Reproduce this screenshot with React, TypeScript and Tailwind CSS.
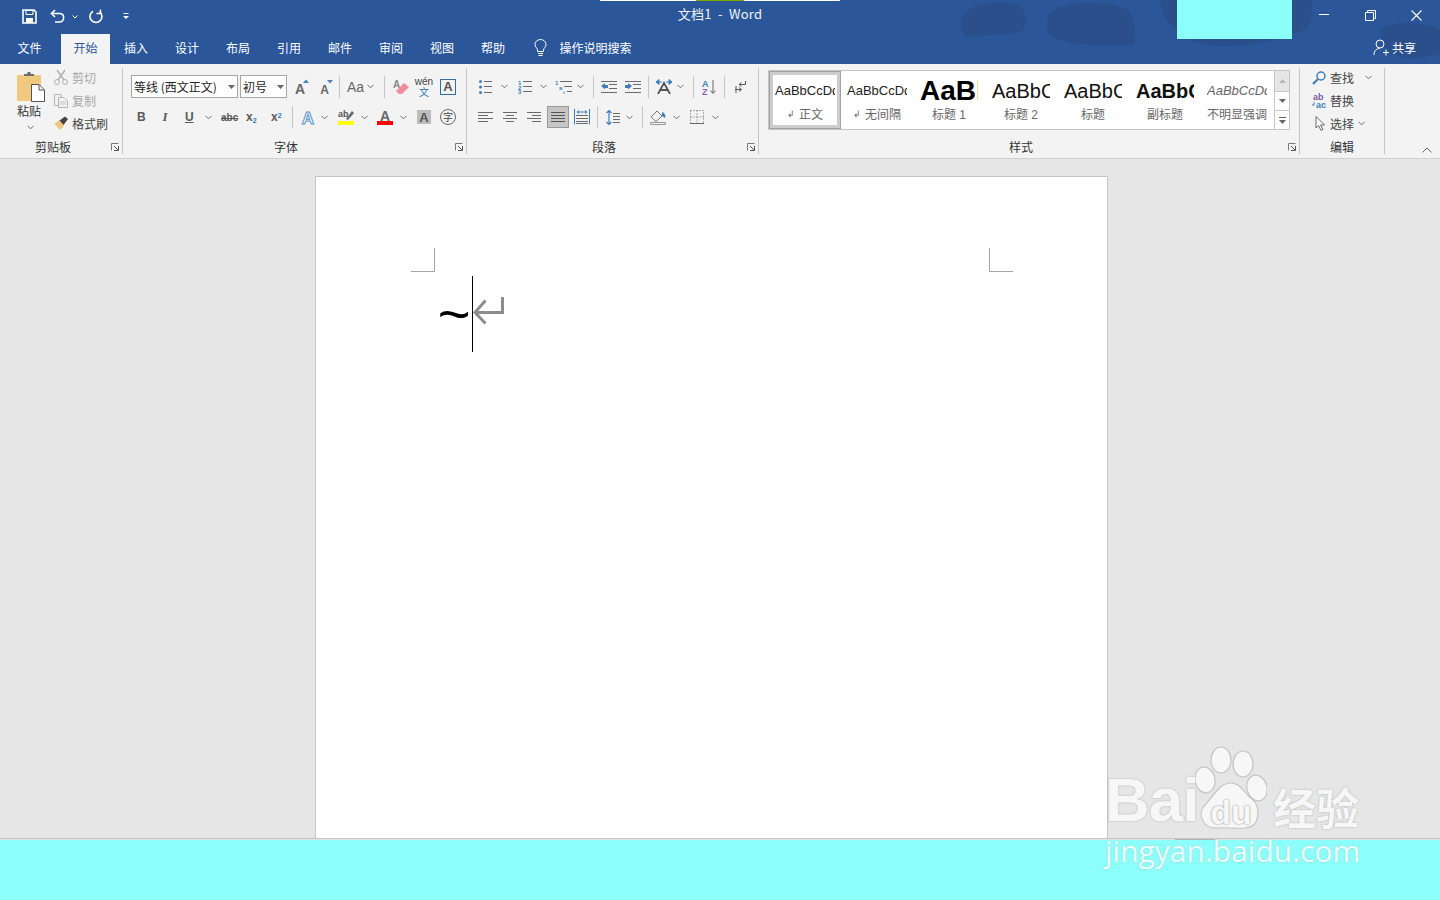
import React from "react";

type P = { className?: string };
const cjk = "font-['Noto_Sans_CJK_SC','Noto_Sans',sans-serif]";

const Svg = ({ w, h = 16, className = "", children }: { w: number; h?: number; className?: string; children: React.ReactNode }) => (
  <svg width={w} height={h} viewBox={`0 0 ${w} ${h}`} className={"block shrink-0 " + className} fill="none">
    {children}
  </svg>
);
const Chev = ({ className = "" }: P) => (
  <Svg w={7} h={5} className={className}><path d="M0.5 0.8 L3.5 3.8 L6.5 0.8" stroke="#6a6a6a" strokeWidth="1" /></Svg>
);
const Sep = ({ className = "" }: P) => <div className={"w-px h-[22px] bg-[#c6c6c6] shrink-0 " + className} />;
const Lines = ({ rows, stroke = "#6a6a6a" }: { rows: [number, number, number][]; stroke?: string }) => (
  <>{rows.map(([x1, x2, y], i) => <path key={i} d={`M${x1} ${y}.5H${x2}`} stroke={stroke} />)}</>
);
const Launcher = ({ className = "" }: P) => (
  <Svg w={8} h={8} className={className}>
    <path d="M0.5 7.5V0.5H7.5" stroke="#7a7a7a" />
    <path d="M7.5 3V7.5H3M7 7L3 3" stroke="#555" />
  </Svg>
);
const GroupLabel = ({ text, launcher = "" }: { text: string; launcher?: string }) => (
  <div className="h-[22px] flex items-center">
    <span className="flex-1 text-center text-[12px] leading-[20px] text-[#333]">{text}</span>
    {launcher && <Launcher className={launcher} />}
  </div>
);
const Divider = () => <div className="w-px h-[86px] mt-[4px] bg-[#c6c6c6] shrink-0" />;
const LetterA = ({ fill = "#666", size = 15, w = 16, y = 14, stroke }: { fill?: string; size?: number; w?: number; y?: number; stroke?: string }) => (
  <text x={w / 2} y={y} textAnchor="middle" fontFamily="Liberation Sans" fontWeight="700" fontSize={size} fill={fill} stroke={stroke} strokeWidth={stroke ? 1 : 0}>A</text>
);
const SmallNum = ({ x, y, t, fill = "#3f7fc0" }: { x: number; y: number; t: string; fill?: string }) => (
  <text x={x} y={y} fontFamily="Liberation Sans" fontSize="6" fontWeight="700" fill={fill}>{t}</text>
);

const Gallery = ({ sample, label, sampleCls, selected = false, mark = false, inner = "w-[60px]" }: { sample: string; label: string; sampleCls: string; selected?: boolean; mark?: boolean; inner?: string }) => (
  <div className={"w-[72px] h-[58px] shrink-0 flex flex-col items-center border " + (selected ? "border-[#a0a0a0] shadow-[inset_0_0_0_3px_#cdcdcd]" : "border-transparent")}>
    <div className={"mt-[1px] h-[36px] shrink-0 overflow-hidden flex items-center whitespace-nowrap " + inner}>
      <span className={sampleCls}>{sample}</span>
    </div>
    <div className="h-[12px] flex items-center justify-center text-[12px] text-[#666] whitespace-nowrap">
      {mark && <span className="text-[9px] mr-[4px] text-[#666]">↲</span>}
      {label}
    </div>
  </div>
);

const Paw = () => (
  <svg width="72" height="86" viewBox="0 0 72 86" className="block shrink-0" fill="#f7f7f7" stroke="#c4c4c4" strokeWidth="1.2">
    <ellipse cx="26" cy="15" rx="10" ry="13" />
    <ellipse cx="48" cy="19" rx="10" ry="13" />
    <ellipse cx="10" cy="35" rx="10" ry="13" transform="rotate(-10 10 35)" />
    <ellipse cx="62" cy="43" rx="10" ry="13" transform="rotate(-15 62 43)" />
    <path d="M36 38C46 38 49 48 57 54C66 61 66 82 50 83C42 84 30 82 22 83C7 84 2 68 10 60C18 52 24 38 36 38Z" />
  </svg>
);

export default function App() {
  return (
    <div className={"relative w-[1440px] h-[900px] overflow-hidden flex flex-col bg-[#e6e6e6] " + cjk}>
      {/* Blue header */}
      <div className="relative h-[64px] shrink-0 bg-[#2b579a] text-white">
        <svg width="480" height="64" viewBox="0 0 480 64" className="absolute right-0 top-0" fill="#2a4f8a">
          <path d="M4 14C14 0 50 0 60 6C68 14 68 28 60 32C44 36 20 34 6 38C0 30 0 22 4 14Z" />
          <path d="M90 14C100 0 150 0 168 10C176 20 176 34 174 44C150 48 120 46 98 40C86 34 84 24 90 14Z" />
          <path d="M200 0H352C352 14 350 26 346 30C330 32 310 46 270 46C240 48 205 36 200 0Z" />
          <path d="M420 30C436 18 470 24 480 30V54C460 60 432 60 424 46Z" />
        </svg>
        <div className="relative h-[36px] flex items-start">
          <div className="w-[600px] h-[33px] flex items-center">
            <Svg w={15} h={15} className="ml-[22px]">
              <path d="M1 1H12L14 3V14H1Z" stroke="#fff" strokeWidth="1.6" />
              <path d="M4 1.5H11V5.5H4Z" stroke="#fff" />
              <path d="M4 9H11V14H4Z" fill="#fff" />
            </Svg>
            <Svg w={16} h={15} className="ml-[13px]">
              <path d="M5 1L1.5 4.5L5 8" stroke="#fff" strokeWidth="1.6" />
              <path d="M2 4.5H9.5C15 4.5 15 13 9.5 13H5" stroke="#fff" strokeWidth="1.6" />
            </Svg>
            <Svg w={6} h={4} className="ml-[6px]"><path d="M0.5 0.5L3 3L5.5 0.5" stroke="#fff" /></Svg>
            <Svg w={15} h={15} className="ml-[11px]">
              <path d="M4 2.2A6 6 0 1 0 10.500 2.6" stroke="#fff" strokeWidth="1.6" />
              <path d="M11.500 0.500V4.500H7.500" stroke="#fff" strokeWidth="1.4" />
            </Svg>
            <Svg w={6} h={7} className="ml-[19px]"><path d="M0.5 0.5H5.5" stroke="#fff" /><path d="M0 3L3 6L6 3Z" fill="#fff" /></Svg>
          </div>
          <div className="w-[240px] h-[36px] flex flex-col items-center">
            <div className="w-full h-px flex bg-white shrink-0">
              <div className="ml-[96px] w-[48px] h-px bg-[#7ba800]" />
            </div>
            <div className="mt-[4px] text-[13px] leading-[18px] whitespace-pre tracking-[0.25px] text-[#f2f2f2]">文档1  -  Word</div>
          </div>
          <div className="flex-1 h-[36px] flex items-center justify-end">
            <Svg w={10} h={2} className="mr-[36px] -mt-[6px]"><path d="M0 0.5H10" stroke="#fff" /></Svg>
            <Svg w={11} h={11} className="mr-[35px] -mt-[6px]">
              <path d="M0.5 2.5H8.5V10.5H0.5Z" stroke="#fff" /><path d="M2.5 2.5V0.5H10.5V8.5H8.5" stroke="#fff" />
            </Svg>
            <Svg w={11} h={11} className="mr-[18px] -mt-[6px]"><path d="M0.5 0.5L10.5 10.5M10.5 0.5L0.5 10.5" stroke="#fff" strokeWidth="1.1" /></Svg>
          </div>
        </div>
        <div className="relative h-[28px] flex items-end text-[12px] text-center pl-[4px]">
          <div className="w-[51px] h-[28px] leading-[24px]">文件</div>
          <div className="w-[49px] h-[30px] ml-[6px] bg-[#f3f3f3] text-[#2b579a] leading-[27px]">开始</div>
          <div className="w-[51px] h-[28px] leading-[24px] ml-[0.5px]">插入</div>
          <div className="w-[51px] h-[28px] leading-[24px]">设计</div>
          <div className="w-[51px] h-[28px] leading-[24px]">布局</div>
          <div className="w-[51px] h-[28px] leading-[24px]">引用</div>
          <div className="w-[51px] h-[28px] leading-[24px]">邮件</div>
          <div className="w-[51px] h-[28px] leading-[24px]">审阅</div>
          <div className="w-[51px] h-[28px] leading-[24px]">视图</div>
          <div className="w-[51px] h-[28px] leading-[24px]">帮助</div>
          <div className="h-[28px] flex items-start pt-[3px] ml-[15px]">
            <Svg w={13} h={17}>
              <path d="M3.5 11C3 8.5 1 8 1 5.5A5.5 5 0 0 1 12 5.5C12 8 10 8.500 9.500 11V12.500H3.500Z" stroke="#fff" />
              <path d="M4 14.500H9M4.500 16.500H8.500" stroke="#fff" />
            </Svg>
          </div>
          <div className="h-[28px] leading-[24px] ml-[13px]">操作说明搜索</div>
          <div className="flex-1 h-[28px] flex items-start justify-end pr-[24px] pt-[3px]">
            <Svg w={16} h={17}>
              <circle cx="7" cy="5" r="4" stroke="#fff" />
              <path d="M1 16C1 11 4 9.500 7 9.500M10 13.500H16M13 10.500V16.500" stroke="#fff" />
            </Svg>
            <span className="ml-[3px] leading-[17px]">共享</span>
          </div>
        </div>
        <div className="absolute left-[1177px] top-0 w-[115px] h-[39px] bg-[#8cfffb]" />
      </div>

      {/* Ribbon */}
      <div className="h-[95px] shrink-0 flex bg-[#f3f3f3] border-b border-[#d0d0d0]">
        {/* Clipboard */}
        <div className="w-[122px] shrink-0 flex flex-col">
          <div className="h-[72px] flex">
            <div className="w-[54px] pl-[17px] pt-[7px] flex flex-col">
              <Svg w={28} h={31}>
                <path d="M0 4H24V30H0Z" fill="#f0c97f" />
                <path d="M7 5V3H10C10 0 14 0 14 3H17V5Z" fill="#6d6d6d" />
                <path d="M14.500 13.500H22L27.500 19V30.500H14.500Z" fill="#fff" stroke="#555" />
                <path d="M22 14V19H27" stroke="#555" />
              </Svg>
              <div className="mt-[1px] text-[12px] leading-[16px] text-[#333]">粘贴</div>
              <Chev className="ml-[10px] mt-[6px]" />
            </div>
            <div className="pt-[2px]">
              <div className="h-[23px] flex items-center text-[12px] text-[#a6a6a6]">
                <Svg w={14} h={15} className="mr-[4px]">
                  <path d="M3 0L10 10M11 0L4 10" stroke="#b0b0b0" strokeWidth="1.5" />
                  <circle cx="3" cy="12" r="2.500" stroke="#b0b0b0" /><circle cx="11" cy="12" r="2.500" stroke="#b0b0b0" />
                </Svg>
                剪切
              </div>
              <div className="h-[23px] flex items-center text-[12px] text-[#a6a6a6]">
                <Svg w={14} h={14} className="mr-[4px]">
                  <path d="M0.500 0.500H7V3M0.500 0.500V11.500H4.500" stroke="#b4b4b4" />
                  <path d="M4.500 3.500H10L13.500 7V13.500H4.500Z" stroke="#b4b4b4" />
                  <path d="M6 8H12M6 10H12" stroke="#c4c4c4" />
                </Svg>
                复制
              </div>
              <div className="h-[23px] flex items-center text-[12px] text-[#444]">
                <Svg w={15} h={15} className="mr-[3px]">
                  <path d="M0.500 8L5 4L10 10L6 14Z" fill="#f0c97f" />
                  <path d="M5.500 4.500L11 0.500L14 3L9.500 9Z" fill="#444" />
                </Svg>
                格式刷
              </div>
            </div>
          </div>
          <GroupLabel text="剪贴板" launcher="ml-[5px] mr-[3px]" />
        </div>
        <Divider />

        {/* Font */}
        <div className="w-[343px] shrink-0 flex flex-col">
          <div className="h-[72px] pt-[11px]">
            <div className="h-[23px] flex items-center">
              <div className="ml-[8px] w-[107px] h-[23px] bg-white border border-[#a6a6a6] flex items-center pl-[2px] text-[12px] text-[#222] whitespace-nowrap">
                <span className="w-[92px]">等线 (西文正文)</span>
                <Svg w={7} h={4} className="ml-[2px]"><path d="M0 0H7L3.500 4Z" fill="#666" /></Svg>
              </div>
              <div className="ml-[2px] w-[47px] h-[23px] bg-white border border-[#a6a6a6] flex items-center pl-[2px] text-[12px] text-[#222]">
                <span className="w-[32px]">初号</span>
                <Svg w={7} h={4} className="ml-[2px]"><path d="M0 0H7L3.500 4Z" fill="#666" /></Svg>
              </div>
              <Svg w={14} h={16} className="ml-[8px]"><LetterA w={10} size={14} y={15} /><path d="M8 4L11 0.500L14 4Z" fill="#4a83bd" /></Svg>
              <Svg w={13} h={16} className="ml-[11px]"><LetterA w={9} size={12} y={15} /><path d="M7 1H13L10 4.500Z" fill="#4a83bd" /></Svg>
              <Sep className="ml-[6px]" />
              <span className="ml-[7px] w-[17px] text-[14px] leading-[16px] text-[#666] font-['Liberation_Sans']">Aa</span>
              <Chev className="ml-[3px]" />
              <Sep className="ml-[10px]" />
              <Svg w={16} h={16} className="ml-[8px]">
                <text x="0" y="9" fontFamily="Liberation Sans" fontSize="10" fontWeight="700" fill="#888">A</text>
                <path d="M3 12L11 4L16 8L9 15H6Z" fill="#ee8d9c" />
              </Svg>
              <div className="ml-[7px] w-[16px] flex flex-col items-center leading-none">
                <span className="text-[10px] h-[9px] leading-[9px] text-[#444] font-['Liberation_Sans']">wén</span>
                <span className="text-[10px] h-[10px] leading-[10px] mt-[1px] text-[#2f75b5]">文</span>
              </div>
              <div className="ml-[8px] w-[16px] h-[16px] border border-[#2f6ea5] flex items-center justify-center text-[13px] leading-none font-bold text-[#555] font-['Liberation_Sans']">A</div>
            </div>
            <div className="mt-[8px] h-[22px] flex items-center text-[#5a5a5a] font-['Liberation_Sans'] font-bold">
              <span className="ml-[14px] w-[8px] text-center text-[12px]">B</span>
              <span className="ml-[16px] w-[8px] text-center text-[13px] italic font-['Liberation_Serif']">I</span>
              <span className="ml-[16px] w-[8px] text-center text-[12px] underline">U</span>
              <Chev className="ml-[12px]" />
              <span className="ml-[9px] w-[16px] text-center text-[10px] line-through">abc</span>
              <span className="ml-[9px] w-[12px] text-[12px] leading-none whitespace-nowrap">x<sub className="text-[7px] text-[#2f75b5]">2</sub></span>
              <span className="ml-[13px] w-[12px] text-[12px] leading-none whitespace-nowrap">x<sup className="text-[7px] text-[#2f75b5]">2</sup></span>
              <Sep className="ml-[9px]" />
              <Svg w={16} h={17} className="ml-[7px]"><LetterA size={17} y={15} fill="#fff" stroke="#5b92c8" /></Svg>
              <Chev className="ml-[5px]" />
              <Svg w={16} h={16} className="ml-[10px]">
                <text x="0" y="8" fontFamily="Liberation Sans" fontSize="9" fontWeight="700" fill="#555">ab</text>
                <path d="M8 10L14 2L16 4L10 11Z" fill="#666" />
                <path d="M0 12H16V16H0Z" fill="#ffff00" />
              </Svg>
              <Chev className="ml-[7px]" />
              <Svg w={16} h={16} className="ml-[9px]">
                <LetterA size={14} y={11.500} fill="#666" />
                <path d="M0 12H16V16H0Z" fill="#ff0000" />
              </Svg>
              <Chev className="ml-[7px]" />
              <div className="ml-[10px] w-[14px] h-[14px] bg-[#bdbdbd] flex items-center justify-center text-[13px] leading-none text-[#555]">A</div>
              <div className={"ml-[9px] w-[16px] h-[16px] rounded-full border border-[#666] flex items-center justify-center text-[10px] font-normal leading-none text-[#444] " + cjk}>字</div>
            </div>
          </div>
          <GroupLabel text="字体" launcher="ml-[6px] mr-[3px]" />
        </div>
        <Divider />

        {/* Paragraph */}
        <div className="w-[291px] shrink-0 flex flex-col">
          <div className="h-[72px] pt-[11px]">
            <div className="h-[23px] flex items-center">
              <Svg w={13} h={14} className="ml-[12px]">
                <circle cx="1.500" cy="1.500" r="1.500" fill="#3f7fc0" /><circle cx="1.500" cy="7" r="1.500" fill="#3f7fc0" /><circle cx="1.500" cy="12.500" r="1.500" fill="#3f7fc0" />
                <Lines rows={[[5, 13, 1], [5, 13, 6], [5, 13, 12]]} />
              </Svg>
              <Chev className="ml-[9px]" />
              <Svg w={14} h={14} className="ml-[10px]">
                <SmallNum x={0} y={4.500} t="1" /><SmallNum x={0} y={9.500} t="2" /><SmallNum x={0} y={14} t="3" />
                <Lines rows={[[5, 14, 1], [5, 14, 6], [5, 14, 11]]} />
              </Svg>
              <Chev className="ml-[8px]" />
              <Svg w={17} h={14} className="ml-[8px]">
                <SmallNum x={0} y={5} t="1" /><SmallNum x={4} y={10} t="a" /><SmallNum x={8} y={14.500} t="i" />
                <Lines rows={[[5, 17, 1], [9, 17, 6], [12, 17, 11]]} />
              </Svg>
              <Chev className="ml-[5px]" />
              <Sep className="ml-[9px]" />
              <Svg w={16} h={14} className="ml-[7px]">
                <Lines rows={[[0, 16, 1], [8, 16, 4], [8, 16, 8], [0, 16, 12]]} />
                <path d="M0 6L4 3V5H7V8H4V9.500Z" fill="#3f7fc0" />
              </Svg>
              <Svg w={16} h={14} className="ml-[8px]">
                <Lines rows={[[0, 16, 1], [8, 16, 4], [8, 16, 8], [0, 16, 12]]} />
                <path d="M7 6L3 3V5H0V8H3V9.500Z" fill="#3f7fc0" />
              </Svg>
              <Sep className="ml-[7px]" />
              <Svg w={16} h={15} className="ml-[7px]">
                <path d="M2 15L8 4L14 15M4.500 11H11.500" stroke="#555" strokeWidth="1.800" />
                <path d="M0 3L3 0.500V5.500ZM16 3L13 0.500V5.500ZM3 3H6M10 3H13" fill="#3f7fc0" stroke="#3f7fc0" />
              </Svg>
              <Chev className="ml-[5px]" />
              <Sep className="ml-[9px]" />
              <Svg w={14} h={16} className="ml-[8px]">
                <text x="0" y="7.500" fontFamily="Liberation Sans" fontSize="9" fontWeight="700" fill="#3f7fc0">A</text>
                <text x="0" y="15.500" fontFamily="Liberation Sans" fontSize="9" fontWeight="700" fill="#8e5fb8">Z</text>
                <path d="M11 1V14M8.500 11.500L11 14.500L13.500 11.500" stroke="#666" />
              </Svg>
              <Sep className="ml-[8px]" />
              <Svg w={11} h={14} className="ml-[10px]">
                <path d="M10.500 1V4.500H4.500M6.500 2.500L4 4.500L6.500 6.500" stroke="#555" />
                <path d="M0 9.500H6M4 7.500L6.500 9.500L4 11.500M1 6V13" stroke="#555" />
              </Svg>
            </div>
            <div className="mt-[8px] h-[22px] flex items-center">
              <Svg w={15} h={11} className="ml-[11px]"><Lines rows={[[0, 15, 0], [0, 10, 3], [0, 15, 6], [0, 10, 9]]} /></Svg>
              <Svg w={14} h={11} className="ml-[10px]"><Lines rows={[[0, 14, 0], [3, 11, 3], [0, 14, 6], [3, 11, 9]]} /></Svg>
              <Svg w={14} h={11} className="ml-[10px]"><Lines rows={[[0, 14, 0], [5, 14, 3], [0, 14, 6], [5, 14, 9]]} /></Svg>
              <div className="ml-[6px] w-[22px] h-[22px] bg-[#c6c6c6] border border-[#9a9a9a] flex items-center justify-center">
                <Svg w={14} h={11}><Lines rows={[[0, 14, 0], [0, 14, 3], [0, 14, 6], [0, 14, 9]]} stroke="#555" /></Svg>
              </div>
              <Svg w={16} h={16} className="ml-[5px]">
                <path d="M0.500 0V15.500M15.500 0V15.500" stroke="#3f7fc0" />
                <path d="M3 3H13M3 3L5 1.500M3 3L5 4.500M13 3L11 1.500M13 3L11 4.500" stroke="#3f7fc0" />
                <Lines rows={[[2, 14, 6], [2, 14, 9], [2, 14, 12], [2, 14, 14]]} />
              </Svg>
              <Sep className="ml-[7px]" />
              <Svg w={14} h={15} className="ml-[8px]">
                <path d="M3 0.500V14.500M0.500 3L3 0.500L5.500 3M0.500 12L3 14.500L5.500 12" stroke="#3f7fc0" strokeWidth="1.200" />
                <Lines rows={[[7, 14, 3], [7, 14, 6], [7, 14, 9], [7, 14, 12]]} />
              </Svg>
              <Chev className="ml-[6px]" />
              <Sep className="ml-[9px]" />
              <Svg w={16} h={16} className="ml-[7px]">
                <path d="M1 8L7 2L12 7L6 12.500Z" stroke="#777" />
                <path d="M12 3C15 4 16 7 15 9L12 7Z" fill="#3f7fc0" />
                <path d="M0.500 13.500H15.500V15.500H0.500Z" stroke="#999" />
              </Svg>
              <Chev className="ml-[7px]" />
              <Svg w={14} h={14} className="ml-[10px]">
                <path d="M0.500 0.500H13.500V13.500H0.500ZM7 0.500V13.500M0.500 7H13.500" stroke="#666" strokeDasharray="1 2" />
                <path d="M0 13.500H14" stroke="#666" />
              </Svg>
              <Chev className="ml-[8px]" />
            </div>
          </div>
          <GroupLabel text="段落" launcher="ml-[6px] mr-[3px]" />
        </div>
        <Divider />

        {/* Styles */}
        <div className="w-[540px] shrink-0 flex flex-col">
          <div className="h-[72px] pt-[6px] pl-[9px]">
            <div className="w-[522px] h-[60px] bg-white border border-[#c6c6c6] flex font-['Liberation_Sans','Noto_Sans_CJK_SC',sans-serif]">
              <Gallery selected mark sample="AaBbCcDd" label="正文" sampleCls="text-[13px] text-[#222]" />
              <Gallery mark sample="AaBbCcDd" label="无间隔" sampleCls="text-[13px] text-[#222]" />
              <Gallery sample="AaBbC" label="标题 1" inner="w-[58px]" sampleCls="text-[28px] font-bold text-black" />
              <Gallery sample="AaBbCc" label="标题 2" inner="w-[58px]" sampleCls="text-[20px] text-[#111]" />
              <Gallery sample="AaBbCc" label="标题" inner="w-[58px]" sampleCls="text-[20px] text-[#111]" />
              <Gallery sample="AaBbCc" label="副标题" inner="w-[58px]" sampleCls="text-[20px] font-bold text-[#111]" />
              <Gallery sample="AaBbCcDd" label="不明显强调" sampleCls="text-[13px] italic text-[#666]" />
              <div className="w-[15px] ml-auto shrink-0 flex flex-col border-l border-[#c6c6c6]">
                <div className="h-[21px] bg-[#e6e6e6] border-b border-[#c6c6c6] flex items-center justify-center"><Svg w={7} h={4}><path d="M0 4H7L3.500 0Z" fill="#b5b5b5" /></Svg></div>
                <div className="h-[19px] border-b border-[#c6c6c6] flex items-center justify-center"><Svg w={7} h={4}><path d="M0 0H7L3.500 4Z" fill="#666" /></Svg></div>
                <div className="flex-1 flex items-center justify-center"><Svg w={7} h={7}><path d="M0 0.500H7" stroke="#666" /><path d="M0 3H7L3.500 7Z" fill="#666" /></Svg></div>
              </div>
            </div>
          </div>
          <GroupLabel text="样式" launcher="ml-[5px] mr-[3px]" />
        </div>
        <Divider />

        {/* Editing */}
        <div className="w-[84px] shrink-0 flex flex-col">
          <div className="h-[72px] pt-[2px] text-[12px] text-[#444]">
            <div className="h-[23px] flex items-center pl-[12px]">
              <Svg w={14} h={14} className="mr-[4px]">
                <circle cx="9" cy="5" r="4" stroke="#3f7fc0" strokeWidth="1.500" />
                <path d="M6 8L1 13" stroke="#3f7fc0" strokeWidth="2.200" />
              </Svg>
              查找
              <Chev className="ml-[11px]" />
            </div>
            <div className="h-[23px] flex items-center pl-[11px]">
              <Svg w={16} h={16} className="mr-[3px]">
                <text x="2" y="7" fontFamily="Liberation Sans" fontSize="9" fontWeight="700" fill="#7e57a8">ab</text>
                <text x="5" y="15" fontFamily="Liberation Sans" fontSize="9" fontWeight="700" fill="#3f7fc0">ac</text>
                <path d="M3 9V12H1" stroke="#3f7fc0" />
              </Svg>
              替换
            </div>
            <div className="h-[23px] flex items-center pl-[15px]">
              <Svg w={11} h={15} className="mr-[4px]">
                <path d="M1 0.500V12L3.500 9.500L6 14.500L8 13.500L5.500 9H9.500Z" stroke="#666" fill="#fff" />
              </Svg>
              选择
              <Chev className="ml-[4px]" />
            </div>
          </div>
          <GroupLabel text="编辑" />
        </div>
        <Divider />
        <div className="flex-1">
          <Svg w={10} h={6} className="ml-[37px] mt-[83px]"><path d="M0.500 5.500L5 1L9.500 5.500" stroke="#666" /></Svg>
        </div>
      </div>

      {/* Document canvas */}
      <div className="h-[679px] shrink-0 overflow-hidden flex pt-[17px] pl-[315px]">
        <div className="w-[793px] h-[700px] shrink-0 bg-white border border-[#c6c6c6] pt-[71px] pl-[95px] pr-[94px]">
          <div className="flex justify-between">
            <div className="w-[24px] h-[24px] border-r border-b border-[#a6a6a6]" />
            <div className="w-[24px] h-[24px] border-l border-b border-[#a6a6a6]" />
          </div>
          <div className="mt-[4px] h-[76px] flex items-center">
            <span className="ml-[25px] w-[36px] text-[56px] leading-[76px] text-black font-['Liberation_Sans'] text-center">~</span>
            <div className="w-px h-[76px] bg-black shrink-0" />
            <Svg w={33} h={30} className="-mt-[4px]">
              <path d="M29.500 0V15.500H2M12.500 3.500L2 15.500L12.500 26.500" stroke="#8c8c8c" strokeWidth="3" />
            </Svg>
          </div>
        </div>
      </div>

      {/* Status strip */}
      <div className="flex-1 flex flex-col">
        <div className="h-[2px] shrink-0 bg-[#e0e0e0] border-t border-[#c6c6c6]">
          <div className="ml-[1175px] w-[40px] h-px bg-[#b4b4b4]" />
        </div>
        <div className="flex-1 bg-[#8cfffb]" />
      </div>

      {/* Watermark */}
      <div className="absolute left-[1105px] top-[745px] w-[262px] h-[125px] flex flex-col text-[#f7f7f7] [text-shadow:0_0_2px_#a8a8a8]">
        <div className="h-[86px] flex items-end">
          <span className="text-[62px] leading-[62px] w-[91px] font-bold tracking-[-1px] font-['Liberation_Sans']">Bai</span>
          <div className="relative w-[72px] h-[86px] -ml-[1px] flex items-end justify-center pb-[3px]">
            <div className="absolute inset-0"><Paw /></div>
            <span className="relative text-[34px] leading-[32px] font-bold text-[#f7f7f7] [text-shadow:0_0_2px_#777] font-['Liberation_Sans']">du</span>
          </div>
          <span className="ml-[6px] text-[43px] leading-[50px] font-bold whitespace-nowrap">经验</span>
        </div>
        <span className="mt-[3px] text-[30px] leading-[34px] whitespace-nowrap font-['Open_Sans'] text-[#e8fffe] [text-shadow:0_0_2px_#9ccac8]">jingyan.baidu.com</span>
      </div>
    </div>
  );
}
